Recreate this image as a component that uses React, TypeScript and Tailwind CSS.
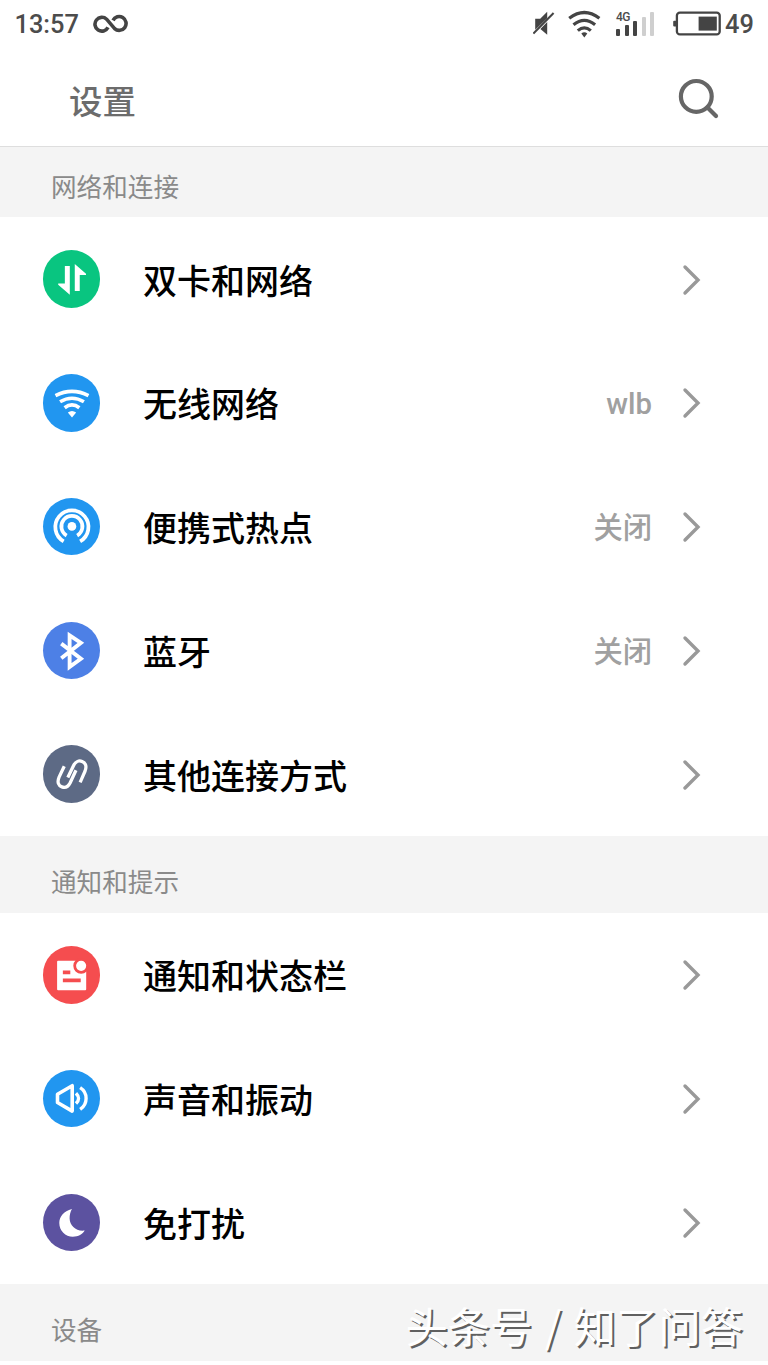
import type { ReactNode } from "react";

function GlyphSvg({ children }: { children: ReactNode }) {
  return (
    <svg viewBox="0 0 58 58" className="h-full w-full" fill="none" stroke="#fff" strokeWidth="3.2">
      {children}
    </svg>
  );
}

const dataIcon = (
  <GlyphSvg>
    <path d="M22 16h5v29L15.3 35v-1.2H22zM32 14l11.3 10v1.3H37v16h-5z" fill="#fff" stroke="none" />
  </GlyphSvg>
);

const wifiIcon = (
  <GlyphSvg>
    <path d="M12.6 21.7Q29.2 13.2 45.8 21.7M17.2 28Q29.2 20.8 41.2 28M21.8 34Q29.2 28.2 36.6 34" strokeWidth="3.6" />
    <path d="M25 38.8Q29.2 35.6 33.4 38.8L29.2 43.8z" fill="#fff" stroke="none" />
  </GlyphSvg>
);

const hotspotIcon = (
  <GlyphSvg>
    <circle cx="29.1" cy="28.6" r="4.4" fill="#fff" stroke="none" />
    <path d="M20.8 43.7A16.7 16.7 0 1 1 37.4 43.7" strokeWidth="3.8" />
    <path d="M23.8 37.8A10.6 10.6 0 1 1 34.4 37.8" strokeWidth="3.8" />
  </GlyphSvg>
);

const bluetoothIcon = (
  <GlyphSvg>
    <path d="M18.4 21.8L38.2 37L26.8 45.2V13.4L38.2 21L18.4 36.6" strokeWidth="3.9" />
  </GlyphSvg>
);

const linkIcon = (
  <GlyphSvg>
    <path
      d="M21.4 21.4L16.2 32.4C14 37.6 15.6 41 19 42.2C22.6 43.4 25.6 41.6 27.4 38L33.2 25.4M25 32.8L30.8 20.6C32.6 17 36 15.2 39.4 16.6C43 18 44.2 21.6 42.4 26.2L37.4 37.6"
      strokeWidth="3.3"
      strokeLinecap="butt"
    />
  </GlyphSvg>
);

const noticeIcon = (
  <GlyphSvg>
    <rect x="14.2" y="14.8" width="29.3" height="29.8" rx="1" fill="#fff" stroke="none" />
    <circle cx="38.4" cy="20" r="6.5" fill="#fff" stroke="#f54d4f" strokeWidth="2.8" />
    <path d="M20 26.5h7.5M20 34.7h18" stroke="#f54d4f" strokeWidth="3.7" />
  </GlyphSvg>
);

const soundIcon = (
  <GlyphSvg>
    <path d="M14.6 24.4L29.4 15.8V41.4L14.6 32.8z" strokeWidth="3.6" strokeLinejoin="round" />
    <path d="M33.2 23.4Q38.4 28.6 33.2 33.8M37.4 17.8C45.4 23 45.4 34.2 37.4 39.6" strokeWidth="3.4" />
  </GlyphSvg>
);

const moonIcon = (
  <GlyphSvg>
    <path
      d="M29.2 15C20.6 17 16.4 23 16.4 29.2C16.4 37 22.6 43 30 43C35.6 43 40 40.4 42 36.8C33.4 38 27 31.8 26.8 24.6C26.7 21 27.6 17.6 29.2 15z"
      fill="#fff"
      stroke="none"
    />
  </GlyphSvg>
);

type Item = { label: string; icon: ReactNode; tone: string; value?: string };

const network: Item[] = [
  { label: "双卡和网络", icon: dataIcon, tone: "bg-[#09c580]" },
  { label: "无线网络", icon: wifiIcon, tone: "bg-[#2196f0]", value: "wlb" },
  { label: "便携式热点", icon: hotspotIcon, tone: "bg-[#2196f0]", value: "关闭" },
  { label: "蓝牙", icon: bluetoothIcon, tone: "bg-[#4d80e6]", value: "关闭" },
  { label: "其他连接方式", icon: linkIcon, tone: "bg-[#5d6a85]" },
];

const notices: Item[] = [
  { label: "通知和状态栏", icon: noticeIcon, tone: "bg-[#f54d4f]" },
  { label: "声音和振动", icon: soundIcon, tone: "bg-[#2196f0]" },
  { label: "免打扰", icon: moonIcon, tone: "bg-[#5c52a0]" },
];

function Row({ label, icon, tone, value }: Item) {
  return (
    <li className="flex h-[123.75px] items-center pr-[66px] pl-[42.5px]">
      <span className={`size-[57.6px] shrink-0 overflow-hidden rounded-full ${tone}`}>{icon}</span>
      <span className="ml-[42.9px] flex-1 pt-px text-[34px] leading-[50px] font-medium text-black">{label}</span>
      {value && (
        <span className="mr-[30px] pt-[3px] font-['Roboto','Noto_Sans_CJK_SC',sans-serif] text-[29.3px] leading-[44px] font-medium text-[#a0a0a0]">
          {value}
        </span>
      )}
      <svg className="mt-px" width="20" height="32" viewBox="0 0 20 32" fill="none" stroke="#999" strokeWidth="3.4" strokeLinecap="round">
        <path d="M3 3L16 16L3 29" />
      </svg>
    </li>
  );
}

function SectionTitle({ children }: { children: ReactNode }) {
  return <h2 className="text-[25.6px] leading-[38px] font-normal text-[#8a8a8a]">{children}</h2>;
}

function StatusBar() {
  return (
    <div className="flex h-12 items-center pr-[14px] pl-[14.5px] font-['Roboto',sans-serif] text-[25.4px] leading-[30px] font-medium text-[#4c4c4c]">
      <span className="w-16">13:57</span>
      <svg className="ml-[14px]" width="36" height="20" viewBox="0 0 36 20" fill="none" stroke="#444" strokeWidth="3.6">
        <path d="M15 13.4A6.9 6.9 0 1 1 13.6 5.2L21.6 14.6A6.9 6.9 0 1 0 20 6.4" />
      </svg>
      <div className="flex-1" />
      <svg width="22" height="26" viewBox="0 0 22 26">
        <path d="M2.2 7.8h5L14.2 0.8V7.2L2.2 18.8zM14.2 11V23.8L7.4 18z" fill="#444" />
        <path d="M0.4 22.6L20.6 2" stroke="#444" strokeWidth="2" />
      </svg>
      <svg className="ml-[13px]" width="33" height="28" viewBox="0 0 33 28" fill="none" stroke="#444" strokeWidth="3.2">
        <path d="M1.2 8.2Q16.3-3.2 31.4 8.2M5.5 14.8Q16.3 5.8 27.1 14.8M9.8 20.6Q16.3 15 22.8 20.6" />
        <path d="M13.3 23.5Q16.3 21 19.3 23.5L16.3 27.4z" fill="#444" stroke="none" />
      </svg>
      <div className="relative ml-[15px] flex h-6 w-10 items-end gap-[4.5px]">
        <span className="absolute -top-px left-0 text-[12px] leading-[12px] tracking-[-0.5px]">4G</span>
        <i className="h-[7px] w-1 rounded-[1px] bg-[#444]" />
        <i className="h-[11px] w-1 rounded-[1px] bg-[#444]" />
        <i className="h-[15.5px] w-1 rounded-[1px] bg-[#444]" />
        <i className="h-[19.5px] w-1 rounded-[1px] bg-[#cfcfcf]" />
        <i className="h-6 w-1 rounded-[1px] bg-[#cfcfcf]" />
      </div>
      <svg className="ml-4" width="50" height="26" viewBox="0 0 50 26">
        <rect x="4.9" y="1.6" width="42.8" height="21.8" rx="3" fill="none" stroke="#444" strokeWidth="2.3" />
        <rect x="1.2" y="9.8" width="3.5" height="5.6" rx="1" fill="#444" />
        <rect x="26.6" y="5.6" width="18.2" height="14" fill="#444" />
      </svg>
      <span className="ml-[3px] w-[29px]">49</span>
    </div>
  );
}

export default function App() {
  return (
    <main className="relative h-[1365px] w-[768px] overflow-hidden bg-white font-['Noto_Sans_CJK_SC',sans-serif]">
      <StatusBar />
      <header className="flex h-[99px] items-center justify-between border-b border-[#dedede] pr-12 pl-[69px]">
        <h1 className="pt-[5px] text-[33.5px] leading-[48px] font-medium text-[#6c6c6c]">设置</h1>
        <svg className="mt-[4px]" width="42" height="42" viewBox="0 0 42 42" fill="none" stroke="#666" strokeWidth="4.2" strokeLinecap="round">
          <circle cx="18.3" cy="18.4" r="15.4" />
          <path d="M29.5 29.6L38 38.1" />
        </svg>
      </header>
      <section className="flex h-[70.2px] items-center bg-[#f4f4f4] pt-2 pl-[51px]">
        <SectionTitle>网络和连接</SectionTitle>
      </section>
      <ul>
        {network.map((item) => (
          <Row key={item.label} {...item} />
        ))}
      </ul>
      <section className="flex h-[77px] items-center bg-[#f4f4f4] pt-[14px] pl-[51px]">
        <SectionTitle>通知和提示</SectionTitle>
      </section>
      <ul>
        {notices.map((item) => (
          <Row key={item.label} {...item} />
        ))}
      </ul>
      <section className="flex h-[76.6px] items-center justify-between bg-[#f4f4f4] pr-[25px] pl-[51px]">
        <div className="pt-[13px]">
          <SectionTitle>设备</SectionTitle>
        </div>
        <p className="pt-[6px] text-[42.3px] leading-[60px] font-normal whitespace-nowrap text-white [word-spacing:3px] [text-shadow:2px_2px_0_#606060]">
          头条号 / 知了问答
        </p>
      </section>
    </main>
  );
}
